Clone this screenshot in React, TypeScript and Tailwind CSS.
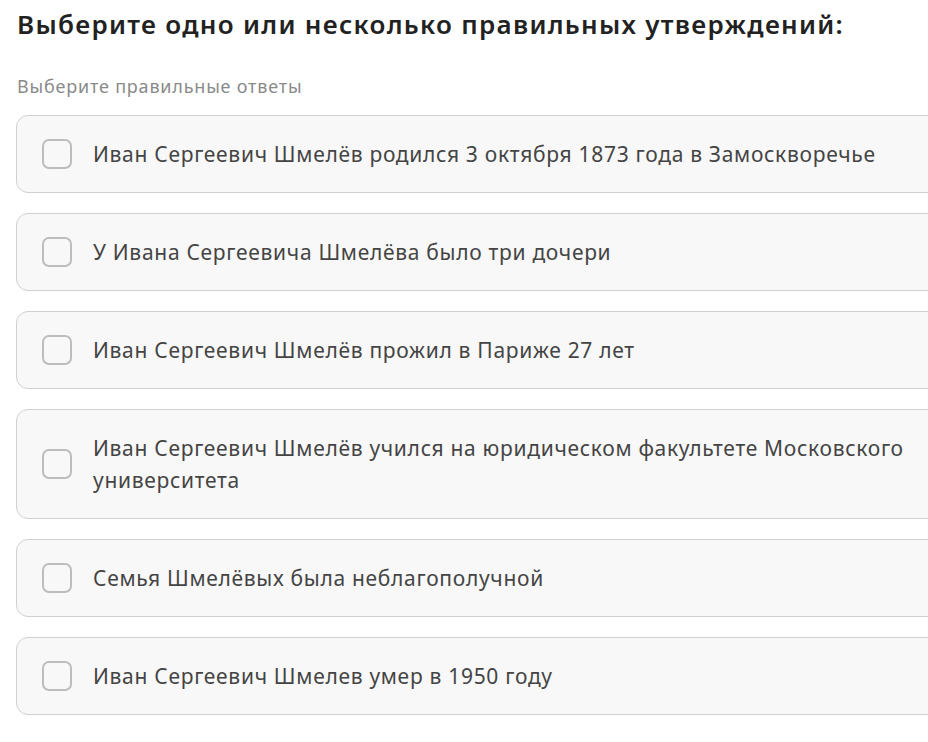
import React from "react";

const options = [
  "Иван Сергеевич Шмелёв родился 3 октября 1873 года в Замоскворечье",
  "У Ивана Сергеевича Шмелёва было три дочери",
  "Иван Сергеевич Шмелёв прожил в Париже 27 лет",
  "Иван Сергеевич Шмелёв учился на юридическом факультете Московского университета",
  "Семья Шмелёвых была неблагополучной",
  "Иван Сергеевич Шмелев умер в 1950 году",
];

function Option({ text }: { text: string }) {
  return (
    <label className="flex items-center gap-[21px] rounded-[12px] border border-[#d0d0d0] bg-[#f8f8f8] pl-[25px] pr-4 py-[22px] cursor-pointer">
      <span className="shrink-0 w-[30px] h-[30px] rounded-[7px] border-2 border-[#bdbdbd] bg-[#f8f8f8]" />
      <span className="text-[21px] leading-[32px] tracking-[0.7px] text-[#444444]">{text}</span>
    </label>
  );
}

export default function App() {
  return (
    <div
      className="w-[928px] h-[742px] overflow-hidden bg-white pl-4"
      style={{ fontFamily: '"Noto Sans", "DejaVu Sans", sans-serif' }}
    >
      <h1 className="pt-[7px] pl-[1px] text-[26px] leading-[34px] tracking-[1.3px] font-semibold text-[#222222]">
        Выберите одно или несколько правильных утверждений:
      </h1>
      <p className="mt-[33px] pl-[1px] text-[18px] leading-[24px] tracking-[0.8px] text-[#8a8a8a]">
        Выберите правильные ответы
      </p>
      <div className="mt-[17px] w-[945px] flex flex-col gap-5">
        {options.map((t) => (
          <Option key={t} text={t} />
        ))}
      </div>
    </div>
  );
}
